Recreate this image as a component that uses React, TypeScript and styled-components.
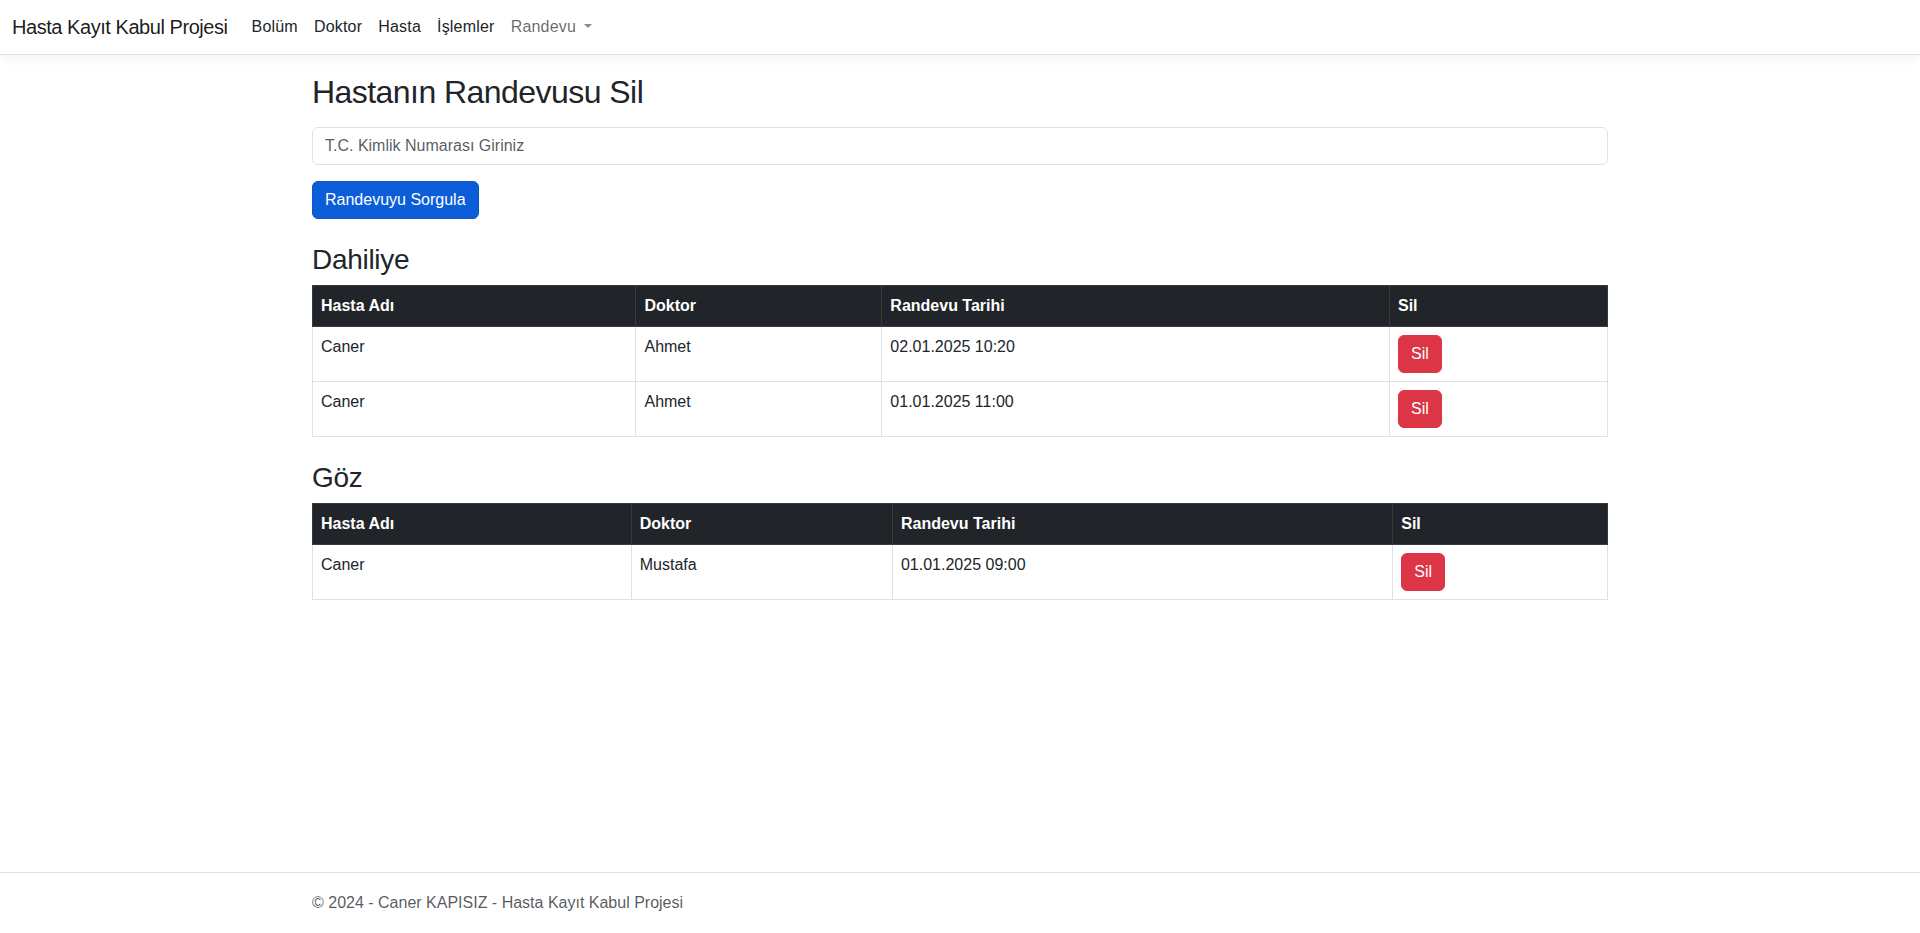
import styled, { createGlobalStyle } from "styled-components";

const GlobalStyle = createGlobalStyle`
  *, *::before, *::after {
    box-sizing: border-box;
  }
  html, body {
    margin: 0;
    padding: 0;
    background-color: #fff;
  }
  body {
    font-family: "Liberation Sans", Arial, sans-serif;
    font-size: 16px;
    line-height: 1.5;
    color: #212529;
  }
`;

const Page = styled.div`
  display: flex;
  flex-direction: column;
  min-height: 100vh;
`;

const Navbar = styled.nav`
  display: flex;
  align-items: center;
  padding: 7px 12px;
  background-color: #fff;
  border-bottom: 1px solid #dee2e6;
  box-shadow: 0 4px 12px rgba(0, 0, 0, 0.05);
  margin-bottom: 18px;
`;

const Brand = styled.a`
  font-size: 20px;
  line-height: 30px;
  letter-spacing: -0.45px;
  padding: 5px 0;
  margin-right: 16px;
  color: rgba(0, 0, 0, 0.9);
  text-decoration: none;
  white-space: nowrap;
`;

const NavList = styled.ul`
  display: flex;
  list-style: none;
  margin: 0;
  padding: 0;
  flex-grow: 1;
`;

const NavLink = styled.a<{ $muted?: boolean }>`
  display: block;
  padding: 8px;
  line-height: 24px;
  letter-spacing: 0.2px;
  color: ${(p) => (p.$muted ? "rgba(0, 0, 0, 0.6)" : "#212529")};
  text-decoration: none;
`;

const Caret = styled.span`
  display: inline-block;
  margin-left: 8px;
  vertical-align: 4px;
  border-top: 4.8px solid rgba(0, 0, 0, 0.45);
  border-left: 4.8px solid transparent;
  border-right: 4.8px solid transparent;
`;

const Container = styled.div`
  width: 100%;
  max-width: 1320px;
  margin: 0 auto;
  padding: 0 12px;
`;

const Main = styled.main`
  flex: 1;
  padding-bottom: 16px;
`;

const Title = styled.h2`
  font-size: 32px;
  font-weight: 500;
  line-height: 1.2;
  letter-spacing: -0.55px;
  margin: 0 0 16px;
`;

const Input = styled.input`
  display: block;
  width: 100%;
  height: 38px;
  padding: 6px 12px;
  font-family: inherit;
  font-size: 16px;
  color: #212529;
  border: 1px solid #dee2e6;
  border-radius: 6px;
  margin-bottom: 16px;
  outline: none;

  &::placeholder {
    color: rgba(33, 37, 41, 0.75);
  }
`;

const Button = styled.button<{ $variant: "primary" | "danger" }>`
  display: inline-block;
  padding: 6px 12px;
  font-family: inherit;
  font-size: 16px;
  line-height: 24px;
  color: #fff;
  border-radius: 6px;
  cursor: pointer;
  background-color: ${(p) => (p.$variant === "primary" ? "#0b5ed7" : "#dc3545")};
  border: 1px solid ${(p) => (p.$variant === "primary" ? "#0a58ca" : "#dc3545")};
`;

const Section = styled.section`
  margin-top: 24px;
`;

const SectionTitle = styled.h3`
  font-size: 28px;
  font-weight: 500;
  line-height: 1.2;
  letter-spacing: -0.3px;
  margin: 0 0 8px;
`;

const Table = styled.table`
  width: 100%;
  border-collapse: collapse;
  margin-bottom: 16px;
  border: 1px solid #dee2e6;
`;

const Th = styled.th`
  text-align: left;
  vertical-align: top;
  font-weight: 700;
  padding: 8px;
  color: #fff;
  background-color: #212529;
  border: 1px solid #373b3e;
`;

const Td = styled.td`
  vertical-align: top;
  padding: 8px;
  border: 1px solid #dee2e6;
`;

const Footer = styled.footer`
  border-top: 1px solid #dee2e6;
  line-height: 60px;
  white-space: nowrap;
  color: rgba(33, 37, 41, 0.75);
`;

interface Appointment {
  patient: string;
  doctor: string;
  date: string;
}

const departments: { name: string; items: Appointment[] }[] = [
  {
    name: "Dahiliye",
    items: [
      { patient: "Caner", doctor: "Ahmet", date: "02.01.2025 10:20" },
      { patient: "Caner", doctor: "Ahmet", date: "01.01.2025 11:00" },
    ],
  },
  {
    name: "Göz",
    items: [{ patient: "Caner", doctor: "Mustafa", date: "01.01.2025 09:00" }],
  },
];

const navItems = ["Bolüm", "Doktor", "Hasta", "İşlemler"];

const App = () => {
  return (
    <Page>
      <GlobalStyle />
      <header>
        <Navbar>
          <Brand href="#">Hasta Kayıt Kabul Projesi</Brand>
          <NavList>
            {navItems.map((item) => (
              <li key={item}>
                <NavLink href="#">{item}</NavLink>
              </li>
            ))}
            <li>
              <NavLink href="#" $muted>
                Randevu
                <Caret />
              </NavLink>
            </li>
          </NavList>
        </Navbar>
      </header>
      <Main>
        <Container>
          <Title>Hastanın Randevusu Sil</Title>
          <form onSubmit={(e) => e.preventDefault()}>
            <Input placeholder="T.C. Kimlik Numarası Giriniz" />
            <Button $variant="primary" type="submit">
              Randevuyu Sorgula
            </Button>
          </form>
          {departments.map((dep) => (
            <Section key={dep.name}>
              <SectionTitle>{dep.name}</SectionTitle>
              <Table>
                <thead>
                  <tr>
                    <Th>Hasta Adı</Th>
                    <Th>Doktor</Th>
                    <Th>Randevu Tarihi</Th>
                    <Th>Sil</Th>
                  </tr>
                </thead>
                <tbody>
                  {dep.items.map((a, i) => (
                    <tr key={i}>
                      <Td>{a.patient}</Td>
                      <Td>{a.doctor}</Td>
                      <Td>{a.date}</Td>
                      <Td>
                        <Button $variant="danger">Sil</Button>
                      </Td>
                    </tr>
                  ))}
                </tbody>
              </Table>
            </Section>
          ))}
        </Container>
      </Main>
      <Footer>
        <Container>© 2024 - Caner KAPISIZ - Hasta Kayıt Kabul Projesi</Container>
      </Footer>
    </Page>
  );
};

export default App;
